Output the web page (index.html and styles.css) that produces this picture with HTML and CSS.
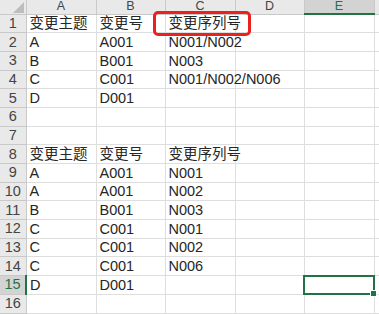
FILE: index.html
```html
<!DOCTYPE html>
<html>
<head>
    <title>变更序列号</title>
    <meta charset="UTF-8">
    <link rel="stylesheet" href="styles.css">
</head>
<body>
    <div class="sheet">
        <table class="grid">
            <colgroup>
                <col class="col-head">
                <col class="col-a">
                <col class="col-b">
                <col class="col-c">
                <col class="col-d">
                <col class="col-e">
                <col class="col-f">
            </colgroup>
            <thead>
                <tr>
                    <th class="corner"><span class="corner-mark"></span></th>
                    <th>A</th>
                    <th>B</th>
                    <th>C</th>
                    <th>D</th>
                    <th class="sel">E</th>
                    <th></th>
                </tr>
            </thead>
            <tbody id="rows"></tbody>
        </table>
        <!-- 标注框 -->
        <div class="mark-box"></div>
    </div>

    <script>
        const data = [
            ['变更主题', '变更号', '变更序列号'],
            ['A', 'A001', 'N001/N002'],
            ['B', 'B001', 'N003'],
            ['C', 'C001', 'N001/N002/N006'],
            ['D', 'D001', ''],
            [],
            [],
            ['变更主题', '变更号', '变更序列号'],
            ['A', 'A001', 'N001'],
            ['A', 'A001', 'N002'],
            ['B', 'B001', 'N003'],
            ['C', 'C001', 'N001'],
            ['C', 'C001', 'N002'],
            ['C', 'C001', 'N006'],
            ['D', 'D001', ''],
            []
        ];
        const activeRow = 15;

        document.getElementById('rows').innerHTML = data.map((row, i) => {
            const n = i + 1;
            const cells = [0, 1, 2, 3, 4, 5].map(c => {
                const text = row[c] || '';
                const cls = (n === activeRow && c === 4) ? ' class="active"' : '';
                return `<td${cls}>${text}</td>`;
            }).join('');
            const headCls = n === activeRow ? 'row-head sel' : 'row-head';
            return `<tr><th class="${headCls}">${n}</th>${cells}</tr>`;
        }).join('');
    </script>
</body>
</html>
```

FILE: styles.css
```css
html, body {
    margin: 0;
    padding: 0;
    background: #fff;
    overflow: hidden;
}
.sheet {
    position: relative;
    width: 379px;
    height: 314px;
    overflow: hidden;
}
.grid {
    border-collapse: collapse;
    table-layout: fixed;
    width: 420px;
    font-family: "Liberation Sans", "Noto Sans CJK SC", sans-serif;
    font-size: 14.5px;
    color: #262626;
}
.col-head { width: 26px; }
.col-a { width: 70px; }
.col-b { width: 69px; }
.col-c { width: 70px; }
.col-d { width: 69px; }
.col-e { width: 70px; }
.col-f { width: 46px; }

thead th {
    height: 12px;
    padding: 0;
    background: #e9e9e9;
    border: 1px solid #c9c9c9;
    border-top: none;
    font-weight: normal;
    font-size: 12.5px;
    line-height: 13px;
    color: #444;
    text-align: center;
    vertical-align: top;
}
thead th.sel {
    background: #d3d3d3;
    color: #217346;
    border-bottom: 2px solid #217346;
}
.corner {
    position: relative;
    border-left: none;
}
.corner-mark {
    position: absolute;
    right: 2px;
    bottom: 1px;
    width: 0;
    height: 0;
    border-left: 11px solid transparent;
    border-bottom: 11px solid #bdbdbd;
}
tbody tr {
    height: 18.7px;
}
tbody td {
    padding: 0 0 0 3px;
    border: 1px solid #dedede;
    white-space: nowrap;
    overflow: visible;
    line-height: 17px;
    vertical-align: bottom;
}
.row-head {
    padding: 0;
    background: #e9e9e9;
    border: 1px solid #c9c9c9;
    border-left: none;
    font-weight: normal;
    font-size: 14.5px;
    color: #444;
    text-align: center;
    line-height: 17px;
}
.row-head.sel {
    background: #d3d3d3;
    color: #217346;
    border-right: 2px solid #217346;
}
td.active {
    position: relative;
    outline: 2px solid #217346;
    outline-offset: -1px;
}
td.active::after {
    content: "";
    position: absolute;
    right: -3px;
    bottom: -3px;
    width: 5px;
    height: 5px;
    background: #217346;
    border: 1px solid #fff;
}
.mark-box {
    position: absolute;
    left: 153px;
    top: 11px;
    width: 92px;
    height: 19px;
    border: 3px solid #e8231f;
    border-radius: 5px;
}
```
